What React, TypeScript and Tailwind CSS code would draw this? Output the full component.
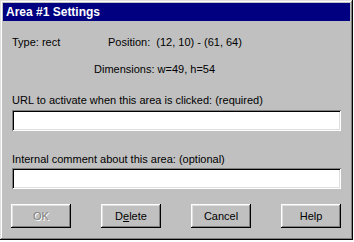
import React from "react";

const raised =
  "shadow-[inset_-1px_-1px_#000000,inset_1px_1px_#ffffff,inset_-2px_-2px_#808080,inset_2px_2px_#dfdfdf]";
const sunken =
  "shadow-[inset_1px_1px_#808080,inset_-1px_-1px_#ffffff,inset_2px_2px_#000000,inset_-2px_-2px_#dfdfdf]";

function Button({ children, disabled = false }: { children: React.ReactNode; disabled?: boolean }) {
  return (
    <button
      className={`flex h-[24px] w-[60px] items-center justify-center bg-[#c0c0c0] text-[11px] ${raised} ${
        disabled ? "text-[#808080] [text-shadow:1px_1px_#ffffff]" : "text-black"
      }`}
    >
      {children}
    </button>
  );
}

function Field() {
  return <div className={`h-[21px] w-[329px] bg-white ${sunken}`} />;
}

export default function App() {
  return (
    <div className="h-[242px] w-[354px] overflow-hidden bg-white font-['Liberation_Sans',Arial,sans-serif]">
      <div className="flex h-[240px] w-[353px] flex-col bg-[#c0c0c0] p-[3px] shadow-[inset_-1px_-1px_#000000,inset_1px_1px_#dfdfdf,inset_-2px_-2px_#808080,inset_2px_2px_#ffffff]">
        <div className="h-[18px] bg-[#000080] pl-[3px] text-[12px] font-bold leading-[18px] text-white">
          Area #1 Settings
        </div>

        <div className="flex flex-col pl-[9px] text-[11px] leading-[13px] text-black">
          <div className="mt-[15px] flex">
            <span className="w-[96px]">Type: rect</span>
            <span>Position:&nbsp; (12, 10) - (61, 64)</span>
          </div>
          <div className="mt-[14px] pl-[82px]">Dimensions: w=49, h=54</div>

          <div className="mt-[18px]">URL to activate when this area is clicked: (required)</div>
          <div className="mt-[3px]">
            <Field />
          </div>

          <div className="mt-[22px]">Internal comment about this area: (optional)</div>
          <div className="mt-[2px]">
            <Field />
          </div>
        </div>

        <div className="mt-[15px] flex gap-[30px] pl-[8px]">
          <Button disabled>OK</Button>
          <Button>
            D<span className="underline">e</span>lete
          </Button>
          <Button>Cancel</Button>
          <Button>Help</Button>
        </div>
      </div>
    </div>
  );
}
